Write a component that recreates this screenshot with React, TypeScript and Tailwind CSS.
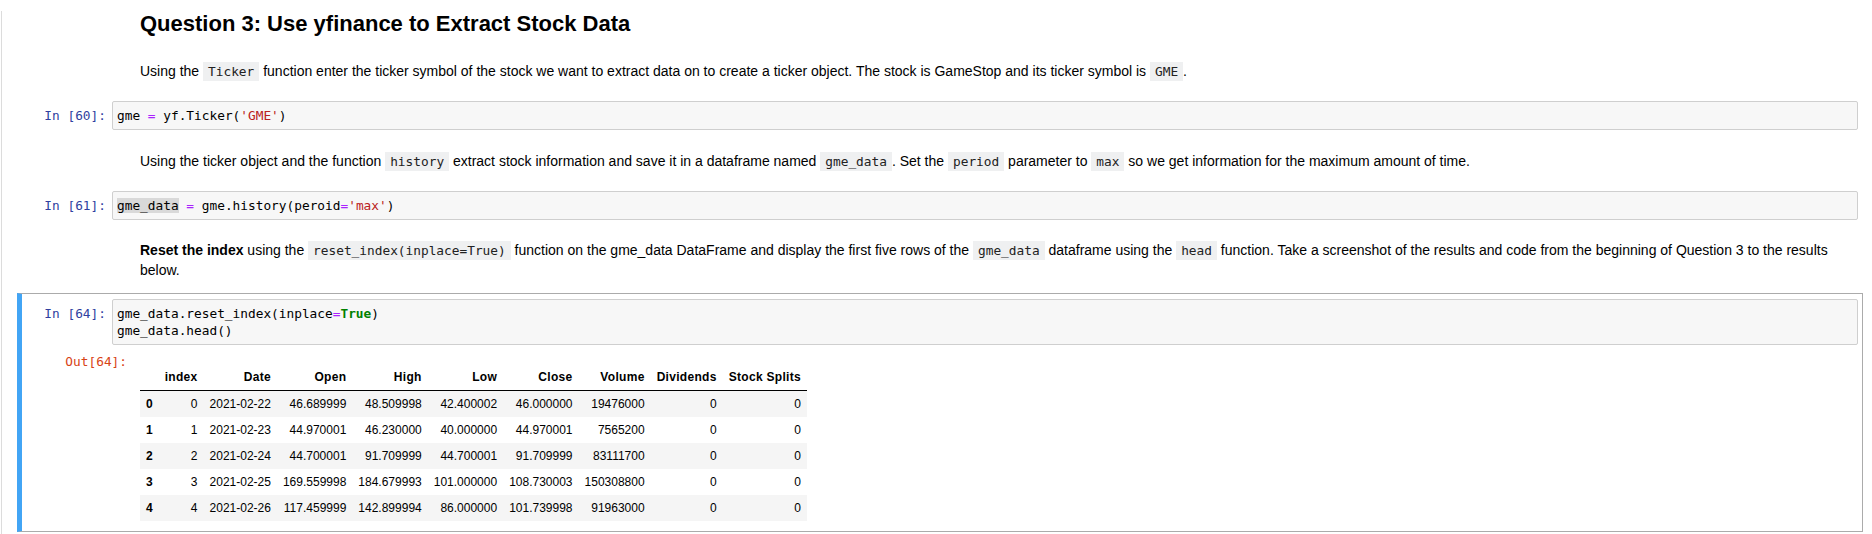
import React from "react";

const rows = [
    ["0", "0", "2021-02-22", "46.689999", "48.509998", "42.400002", "46.000000", "19476000", "0", "0"],
    ["1", "1", "2021-02-23", "44.970001", "46.230000", "40.000000", "44.970001", "7565200", "0", "0"],
    ["2", "2", "2021-02-24", "44.700001", "91.709999", "44.700001", "91.709999", "83111700", "0", "0"],
    ["3", "3", "2021-02-25", "169.559998", "184.679993", "101.000000", "108.730003", "150308800", "0", "0"],
    ["4", "4", "2021-02-26", "117.459999", "142.899994", "86.000000", "101.739998", "91963000", "0", "0"],
];

const headers = ["", "index", "Date", "Open", "High", "Low", "Close", "Volume", "Dividends", "Stock Splits"];

function Code({ children }: { children: React.ReactNode }) {
    return (
        <code className="bg-[#eff0f1] px-[5px] py-[2px] font-['DejaVu_Sans_Mono',monospace] text-[12.8px] leading-[14px] text-[#222]">
            {children}
        </code>
    );
}

function Cell({ n, selected, children, output }: { n: number; selected?: boolean; children: React.ReactNode; output?: React.ReactNode }) {
    return (
        <div
            className={
                selected
                    ? "ml-[15px] w-[1846px] border border-l-[5px] border-[#ababab] border-l-[#42a5f5] pt-[5px] pb-[10px]"
                    : "ml-[15px] w-[1846px] border border-l-[5px] border-transparent py-[5px]"
            }
        >
            <div className="flex">
                <div className="w-[90px] shrink-0 pr-[6px] pt-[6px] text-right font-['DejaVu_Sans_Mono',monospace] text-[12.8px] leading-[17px] text-[#303f9f]">
                    In&nbsp;[{n}]:
                </div>
                <div className="mr-[4px] flex-1 rounded-[2px] border border-[#cfcfcf] bg-[#f7f7f7] px-[4px] py-[5px] font-['DejaVu_Sans_Mono',monospace] text-[12.8px] leading-[17px] whitespace-pre text-black">
                    {children}
                </div>
            </div>
            {output}
        </div>
    );
}

export default function App() {
    return (
        <div className="h-[534px] w-[1872px] overflow-hidden bg-white font-['Liberation_Sans',Arial,sans-serif] text-black">
            <div className="ml-px h-full border-l border-[#dcdcdc]">
                <h2 className="mt-[11px] pl-[138px] text-[22px] leading-[26px] font-bold">
                    Question 3: Use yfinance to Extract Stock Data
                </h2>

                <p className="mt-[24px] h-[20px] w-[1853px] pl-[138px] text-[14px] leading-[20px]">
                    Using the <Code>Ticker</Code> function enter the ticker symbol of the stock we want to extract data on to create a ticker
                    object. The stock is GameStop and its ticker symbol is <Code>GME</Code>.
                </p>

                <div className="mt-[14px]">
                    <Cell n={60}>
                        gme <span className="text-[#aa22ff]">=</span> yf.Ticker(<span className="text-[#ba2121]">'GME'</span>)
                    </Cell>
                </div>

                <p className="mt-[15px] h-[20px] w-[1853px] pl-[138px] text-[14px] leading-[20px]">
                    Using the ticker object and the function <Code>history</Code> extract stock information and save it in a dataframe named{" "}
                    <Code>gme_data</Code>. Set the <Code>period</Code> parameter to <Code>max</Code> so we get information for the maximum
                    amount of time.
                </p>

                <div className="mt-[14px]">
                    <Cell n={61}>
                        <span className="bg-[#d9d9d9]">gme_data</span> <span className="text-[#aa22ff]">=</span> gme.history(peroid
                        <span className="text-[#aa22ff]">=</span>
                        <span className="text-[#ba2121]">'max'</span>)
                    </Cell>
                </div>

                <p className="mt-[14px] h-[40px] w-[1853px] pl-[138px] text-[14px] leading-[20px]">
                    <b>Reset the index</b> using the <Code>reset_index(inplace=True)</Code> function on the gme_data DataFrame and display the
                    first five rows of the <Code>gme_data</Code> dataframe using the <Code>head</Code> function. Take a screenshot of the results
                    and code from the beginning of Question 3 to the results below.
                </p>

                <div className="mt-[13px]">
                    <Cell
                        n={64}
                        selected
                        output={
                            <div className="flex items-start">
                                <div className="mt-[8px] w-[111px] shrink-0 pr-[6px] text-right font-['DejaVu_Sans_Mono',monospace] text-[12.8px] leading-[17px] text-[#d84315]">
                                    Out[64]:
                                </div>
                                <table className="mt-[19px] ml-[7px] border-collapse text-[12px] leading-[14px]">
                                    <thead>
                                        <tr>
                                            {headers.map((h, i) => (
                                                <th
                                                    key={i}
                                                    className="border-b border-black px-[6px] py-[6px] text-right font-bold tracking-[0.3px] whitespace-nowrap"
                                                >
                                                    {h}
                                                </th>
                                            ))}
                                        </tr>
                                    </thead>
                                    <tbody>
                                        {rows.map((r, i) => (
                                            <tr key={i} className={i % 2 === 0 ? "bg-[#f5f5f5]" : "bg-white"}>
                                                {r.map((c, j) =>
                                                    j === 0 ? (
                                                        <th key={j} className="px-[6px] py-[6px] text-right font-bold">
                                                            {c}
                                                        </th>
                                                    ) : (
                                                        <td key={j} className="px-[6px] py-[6px] text-right">
                                                            {c}
                                                        </td>
                                                    )
                                                )}
                                            </tr>
                                        ))}
                                    </tbody>
                                </table>
                            </div>
                        }
                    >
                        {"gme_data.reset_index(inplace"}
                        <span className="text-[#aa22ff]">=</span>
                        <span className="font-bold text-[#008000]">True</span>
                        {")\ngme_data.head()"}
                    </Cell>
                </div>
            </div>
        </div>
    );
}
